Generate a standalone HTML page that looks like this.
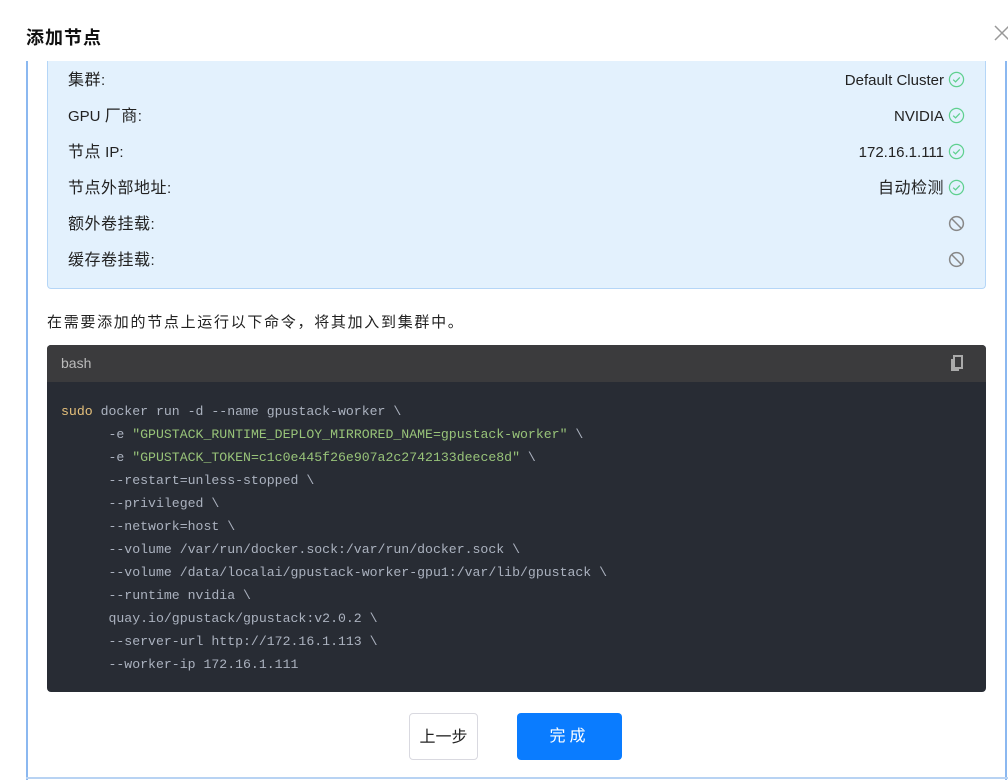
<!DOCTYPE html>
<html><head><meta charset="utf-8"><style>
*{margin:0;padding:0;box-sizing:border-box}
body{width:1008px;height:780px;background:#fff;position:relative;overflow:hidden;font-family:"Liberation Sans","Noto Sans CJK SC",sans-serif;color:#222}
.c{font-size:16px;letter-spacing:0.5px}
.title{position:absolute;left:26px;top:24px;font-size:18px;font-weight:bold;color:#111;letter-spacing:1px}
.close{position:absolute;left:993px;top:24px;width:18px;height:18px}
.vl{position:absolute;top:61px;width:2px;height:719px;background:#8bb8f0}
.bl{position:absolute;left:26px;top:777px;width:982px;height:2px;background:#b8d3f3}
.info{position:absolute;left:47px;top:61px;width:939px;height:228px;background:#e3f1fd;border:1px solid #b5d6f7;border-top:none;border-radius:0 0 4px 4px}
.row{position:absolute;left:20px;right:20px;height:24px;font-size:15px;line-height:24px}
.row .v{position:absolute;right:0;top:0;height:24px;display:flex;align-items:center;gap:4px}
.row svg{display:block;position:relative;top:-2px}
.desc{position:absolute;left:47px;top:311px;font-size:15px;letter-spacing:1.7px;color:#222}
.code{position:absolute;left:47px;top:345px;width:939px;height:347px;background:#282c34;border-radius:4px;overflow:hidden}
.ch{height:37px;background:#3b3b3d;color:#bbb;font-size:14px;line-height:37px;padding-left:14px}
pre{font-family:"Liberation Mono","DejaVu Sans Mono",monospace;font-size:13.2px;line-height:23px;color:#abb2bf;padding:18px 0 0 14px}
.k{color:#e5c07b}.s{color:#98c379}
.btn{position:absolute;top:713px;height:47px;border-radius:4px;font-size:16px;text-align:center;line-height:47px}
</style></head><body>
<div class="title">添加节点</div>
<svg class="close" viewBox="0 0 18 18"><path d="M2 2L16 16M16 2L2 16" stroke="#999" stroke-width="1.5"/></svg>
<div class="vl" style="left:26px"></div>
<div class="vl" style="left:1005px"></div>
<div class="bl"></div>
<div class="info">
<div class="row" style="top:8px"><span class="c">集群</span>:<span class="v">Default Cluster <svg width="17" height="17" viewBox="0 0 18 18"><circle cx="9" cy="9" r="7.5" fill="none" stroke="#5fd08f" stroke-width="1.3"/><path d="M5.5 9.2L8 11.5L12.5 6.8" fill="none" stroke="#5fd08f" stroke-width="1.3"/></svg></span></div>
<div class="row" style="top:44px">GPU <span class="c">厂商</span>:<span class="v">NVIDIA <svg width="17" height="17" viewBox="0 0 18 18"><circle cx="9" cy="9" r="7.5" fill="none" stroke="#5fd08f" stroke-width="1.3"/><path d="M5.5 9.2L8 11.5L12.5 6.8" fill="none" stroke="#5fd08f" stroke-width="1.3"/></svg></span></div>
<div class="row" style="top:80px"><span class="c">节点</span> IP:<span class="v">172.16.1.111 <svg width="17" height="17" viewBox="0 0 18 18"><circle cx="9" cy="9" r="7.5" fill="none" stroke="#5fd08f" stroke-width="1.3"/><path d="M5.5 9.2L8 11.5L12.5 6.8" fill="none" stroke="#5fd08f" stroke-width="1.3"/></svg></span></div>
<div class="row" style="top:116px"><span class="c">节点外部地址</span>:<span class="v"><span class="c">自动检测</span> <svg width="17" height="17" viewBox="0 0 18 18"><circle cx="9" cy="9" r="7.5" fill="none" stroke="#5fd08f" stroke-width="1.3"/><path d="M5.5 9.2L8 11.5L12.5 6.8" fill="none" stroke="#5fd08f" stroke-width="1.3"/></svg></span></div>
<div class="row" style="top:152px"><span class="c">额外卷挂载</span>:<span class="v"><svg width="17" height="17" viewBox="0 0 18 18"><circle cx="9" cy="9" r="7.3" fill="none" stroke="#888" stroke-width="1.6"/><path d="M4 4L14 14" stroke="#888" stroke-width="1.6"/></svg></span></div>
<div class="row" style="top:188px"><span class="c">缓存卷挂载</span>:<span class="v"><svg width="17" height="17" viewBox="0 0 18 18"><circle cx="9" cy="9" r="7.3" fill="none" stroke="#888" stroke-width="1.6"/><path d="M4 4L14 14" stroke="#888" stroke-width="1.6"/></svg></span></div>
</div>
<div class="desc">在需要添加的节点上运行以下命令，将其加入到集群中。</div>
<div class="code">
<div class="ch">bash<svg style="position:absolute;left:903px;top:10px" width="14" height="16" viewBox="0 0 14 16"><path d="M4 1H12V13H4Z" fill="none" stroke="#aaa" stroke-width="2"/><path d="M2 4V15H9" fill="none" stroke="#aaa" stroke-width="2"/></svg></div>
<pre><span class="k">sudo</span> docker run -d --name gpustack-worker \
      -e <span class="s">"GPUSTACK_RUNTIME_DEPLOY_MIRRORED_NAME=gpustack-worker"</span> \
      -e <span class="s">"GPUSTACK_TOKEN=c1c0e445f26e907a2c2742133deece8d"</span> \
      --restart=unless-stopped \
      --privileged \
      --network=host \
      --volume /var/run/docker.sock:/var/run/docker.sock \
      --volume /data/localai/gpustack-worker-gpu1:/var/lib/gpustack \
      --runtime nvidia \
      quay.io/gpustack/gpustack:v2.0.2 \
      --server-url http://172.16.1.113 \
      --worker-ip 172.16.1.111</pre>
</div>
<div class="btn" style="left:409px;width:69px;border:1px solid #d9d9e0;color:#222">上一步</div>
<div class="btn" style="left:517px;width:105px;background:#0a7cff;color:#fff;letter-spacing:4px">完成</div>
</body></html>
